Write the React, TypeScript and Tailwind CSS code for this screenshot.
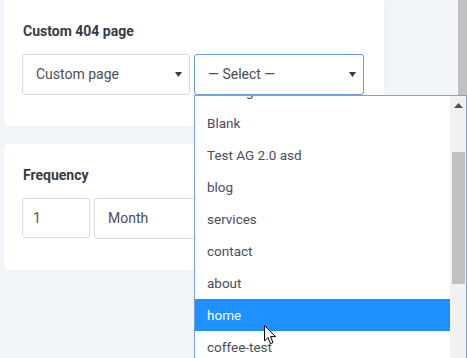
import React from "react";

const pages = [
  "Coming soon",
  "Blank",
  "Test AG 2.0 asd",
  "blog",
  "services",
  "contact",
  "about",
  "home",
  "coffee-test",
];

function Caret() {
  return (
    <svg width="7" height="5" viewBox="0 0 7 5" className="shrink-0">
      <path d="M0 0 L7 0 L3.5 5 Z" fill="#3a3a3a" />
    </svg>
  );
}

function SelectBox({
  label,
  width,
  focused,
}: {
  label: string;
  width: string;
  focused?: boolean;
}) {
  return (
    <div
      className={`${width} h-[41px] flex items-center justify-between pl-[13px] pr-[7px] rounded-[3px] bg-white border ${
        focused ? "border-[#6a9ee0]" : "border-[#dcdcdc]"
      }`}
    >
      <span className="text-[14px] text-[#4a4e58]">{label}</span>
      <Caret />
    </div>
  );
}

function Cursor() {
  return (
    <svg
      width="13"
      height="20"
      viewBox="0 0 13 20"
      className="absolute left-[264px] top-[325px]"
    >
      <path
        d="M0.5 0.5 L0.5 16 L4 12.5 L6.6 18.6 L9 17.6 L6.5 11.6 L11.5 11.6 Z"
        fill="#fff"
        stroke="#000"
        strokeWidth="1"
        strokeLinejoin="round"
      />
    </svg>
  );
}

export default function App() {
  return (
    <div
      className="relative w-[467px] h-[358px] overflow-hidden flex bg-[#f1f4f9]"
      style={{ fontFamily: "Roboto, 'Liberation Sans', sans-serif" }}
    >
      {/* Main column */}
      <div className="flex-1 pl-[4px]">
        {/* Custom 404 page */}
        <div className="w-[380px] bg-white rounded-b-[5px] px-[18px] pt-[23px] pb-[31px] shadow-[0_1px_2px_rgba(0,0,0,0.03)]">
          <h3 className="text-[14px] leading-[16px] font-bold text-[#373c47] pl-[1px]">
            Custom 404 page
          </h3>
          <div className="mt-[15px] flex gap-[4px]">
            <SelectBox label="Custom page" width="w-[168px]" />
            <SelectBox label="— Select —" width="w-[170px]" focused />
          </div>
        </div>

        {/* Frequency */}
        <div className="mt-[18px] w-[380px] bg-white rounded-[5px] px-[18px] pt-[23px] pb-[31px] shadow-[0_1px_2px_rgba(0,0,0,0.03)]">
          <h3 className="text-[14px] leading-[16px] font-bold text-[#373c47] pl-[1px]">
            Frequency
          </h3>
          <div className="mt-[15px] flex gap-[4px]">
            <div className="w-[68px] h-[40px] flex items-center pl-[10px] rounded-[3px] border border-[#dcdcdc] text-[14px] text-[#4a4e58]">
              1
            </div>
            <SelectBox label="Month" width="w-[270px]" />
          </div>
        </div>
      </div>

      {/* Page scrollbar */}
      <div className="w-[9px] bg-[#c1c1c1]" />

      {/* Open dropdown list */}
      <div className="absolute left-[194px] top-[95px] w-[273px] h-[270px] bg-white border border-[#7aa0db] flex overflow-hidden">
        <div className="flex-1 -mt-[21px]">
          {pages.map((p) => (
            <div
              key={p}
              className={`h-[32px] flex items-center pl-[12px] text-[13.5px] ${
                p === "home" ? "bg-[#1e90ff] text-white" : "text-[#4a4e5c]"
              }`}
            >
              {p}
            </div>
          ))}
        </div>
        <div className="w-[16px] bg-[#f1f1f1] flex flex-col items-center">
          <svg width="9" height="5" viewBox="0 0 9 5" className="mt-[7px]">
            <path d="M0 5 L9 5 L4.5 0 Z" fill="#505050" />
          </svg>
          <div className="mt-[44px] w-[13px] h-[132px] bg-[#c1c1c1] ml-[1px]" />
        </div>
      </div>

      <Cursor />
    </div>
  );
}
